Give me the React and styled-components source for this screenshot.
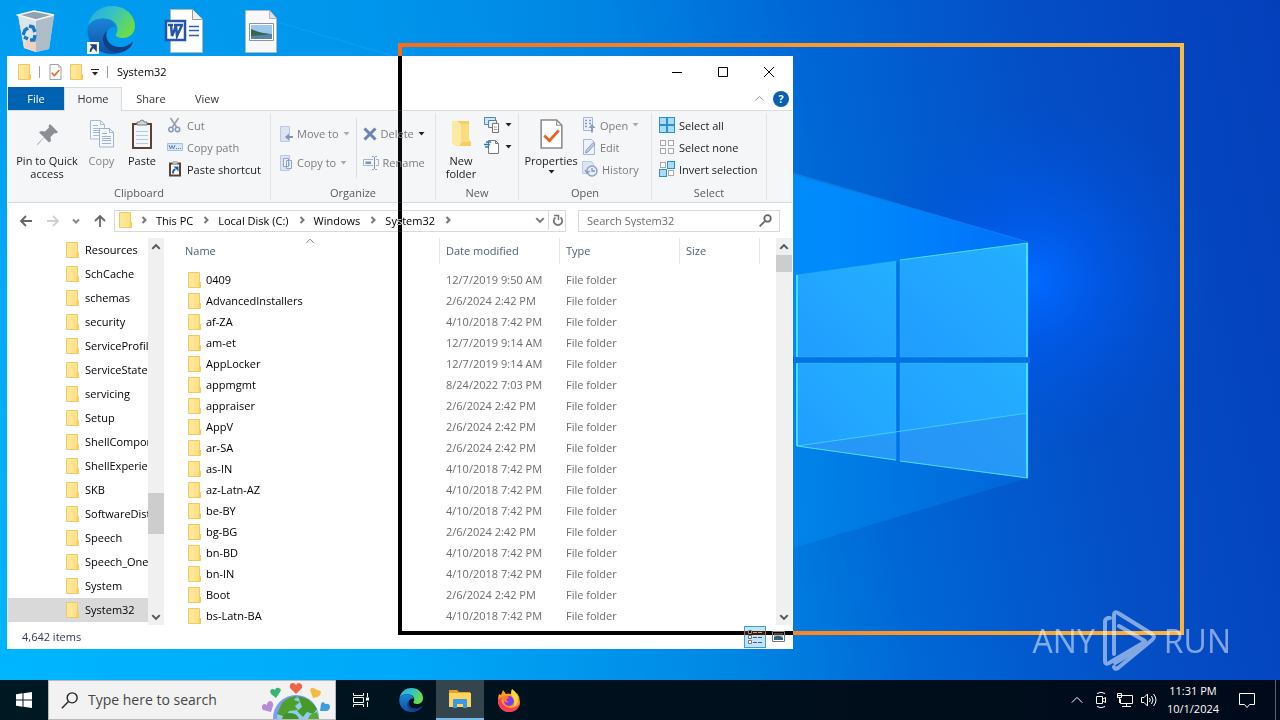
import React from "react";
import styled, { createGlobalStyle } from "styled-components";

const GlobalStyle = createGlobalStyle`
  * {
    box-sizing: border-box;
  }

  body {
    margin: 0;
    font-family: "Open Sans", "Noto Sans", sans-serif;
    font-size: 11px;
    line-height: 13px;
    color: #111;
    overflow: hidden;
  }

  button, input {
    font: inherit;
    color: inherit;
    background: none;
    border: none;
    padding: 0;
    margin: 0;
  }

  svg {
    display: block;
    flex: none;
  }
`;

const Screen = styled.div`
  display: flex;
  flex-direction: column;
  height: 100vh;
`;

const Desktop = styled.main`
  position: relative;
  isolation: isolate;
  flex: 1;
  min-height: 0;
  overflow: hidden;
`;

const Wallpaper = styled.svg`
  position: absolute;
  inset: 0;
  width: 100%;
  height: 100%;
`;

const Shortcuts = styled.div`
  position: relative;
  display: flex;
  gap: 27px;
  padding: 6px 12px;
`;

const Shortcut = styled.button`
  width: 48px;
  height: 50px;
  display: flex;
  justify-content: center;
`;

/* ---------- explorer window ---------- */

const Window = styled.section`
  position: absolute;
  left: 7px;
  right: 487px;
  top: 56px;
  bottom: 31px;
  display: flex;
  flex-direction: column;
  padding: 0 1px;
  background: #fff;
`;

const TitleBar = styled.header`
  display: flex;
  align-items: center;
  height: 31px;
  padding-left: 10px;
  gap: 8px;
`;

const WindowTitle = styled.h1`
  flex: 1;
  margin: 0;
  font-size: 11px;
  font-weight: 400;
  color: #000;
`;

const Divider = styled.span`
  width: 1px;
  height: 12px;
  margin-right: 1px;
  background: #a0a0a0;
`;

const Captions = styled.div`
  display: flex;
`;

const CaptionButton = styled.button`
  width: 46px;
  height: 31px;
  display: flex;
  align-items: center;
  justify-content: center;
`;

const Tabs = styled.nav`
  display: flex;
  height: 24px;
  border-bottom: 1px solid #dadbdc;
`;

const Tab = styled.button`
  width: ${(p) => p.$width || 56}px;
  height: ${(p) => (p.$active ? 24 : 23)}px;
  padding-bottom: ${(p) => (p.$active ? 2 : 0)}px;
  color: ${(p) => (p.$file ? "#fff" : "#333")};
  background: ${(p) => (p.$file ? "#0063b1" : p.$active ? "#f5f6f7" : "none")};
  border: ${(p) => (p.$active ? "1px solid #dadbdc" : "none")};
  border-bottom: none;
`;

const TabsEnd = styled.div`
  display: flex;
  align-items: center;
  gap: 8px;
  margin-left: auto;
  padding-right: 3px;
`;

const HelpButton = styled.button`
  width: 16px;
  height: 16px;
  border-radius: 50%;
  background: #0a5fb4;
  color: #fff;
  font-weight: 700;
`;

const Ribbon = styled.div`
  display: flex;
  height: 92px;
  background: #f5f6f7;
  border-bottom: 1px solid #dadbdc;
`;

const Group = styled.section`
  display: flex;
  flex-direction: column;
  align-items: center;
  width: ${(p) => p.$width}px;
  margin: 2px 0;
  border-right: 1px solid #e2e3e4;
`;

const GroupBody = styled.div`
  display: flex;
  align-items: flex-start;
  width: 100%;
  height: 72px;
  padding-left: ${(p) => p.$indent || 0}px;
`;

const GroupLabel = styled.h2`
  margin: 0;
  font-size: 11px;
  line-height: 15px;
  font-weight: 400;
  color: #5a5a5a;
`;

const BigButton = styled.button`
  display: flex;
  flex-direction: column;
  align-items: center;
  gap: 3px;
  width: ${(p) => p.$width}px;
  padding-top: 4px;
  color: ${(p) => (p.$disabled ? "#838383" : "#222")};
`;

const BigIcon = styled.span`
  display: flex;
  align-items: center;
  height: 34px;
`;

const Stack = styled.div`
  display: flex;
  flex-direction: column;
  padding: ${(p) => (p.$tall ? "6px 0 0" : "1px 0 0")};
`;

const SmallButton = styled.button`
  display: flex;
  align-items: center;
  gap: 4px;
  height: ${(p) => (p.$tall ? 29 : 22)}px;
  color: ${(p) => (p.$disabled ? "#7c7c7c" : "#222")};
  white-space: nowrap;
`;

const OrganizeDivider = styled.span`
  width: 1px;
  height: 60px;
  margin: 5px 6px 0 6px;
  background: #dcdddf;
`;

const AddressBar = styled.div`
  display: flex;
  align-items: center;
  height: 35px;
  padding: 0 12px 0 11px;
  gap: 12px;
`;

const NavButtons = styled.div`
  display: flex;
  align-items: center;
  justify-content: space-between;
  width: 88px;
`;

const Breadcrumb = styled.div`
  display: flex;
  align-items: center;
  flex: 1;
  height: 22px;
  margin-left: -5px;
  padding: 0 0 1px 4px;
  border: 1px solid #d9d9d9;
  color: #000;
`;

const Crumb = styled.button`
  display: flex;
  align-items: center;
  gap: 9px;
  padding-left: 8px;
`;

const RefreshBox = styled.div`
  display: flex;
  align-items: center;
  margin-left: auto;
  height: 100%;
  gap: 3px;

  button + button {
    height: 100%;
    padding: 0 1px 0 2px;
    border-left: 1px solid #d9d9d9;
  }
`;

const SearchField = styled.label`
  display: flex;
  align-items: center;
  width: 202px;
  height: 22px;
  padding: 0 7px 1px 8px;
  border: 1px solid #d9d9d9;

  input {
    flex: 1;
    min-width: 0;
    outline: none;
  }

  input::placeholder {
    color: #6d6d6d;
    opacity: 1;
  }
`;

const Content = styled.div`
  display: flex;
  flex: 1;
  min-height: 0;
`;

const Tree = styled.ul`
  width: 140px;
  margin: 0;
  padding: 0;
  list-style: none;
  overflow: hidden;
`;

const TreeLink = styled.a`
  display: flex;
  align-items: center;
  gap: 6px;
  height: 24px;
  padding: 0 0 1px 58px;
  color: #000;
  text-decoration: none;
  white-space: nowrap;
  background: ${(p) => (p.$selected ? "#d9d9d9" : "none")};
`;

const ScrollTrack = styled.div`
  display: flex;
  flex-direction: column;
  align-items: center;
  width: 16px;
  background: #f0f0f0;

  button {
    height: 17px;
  }
`;

const ScrollSpace = styled.div`
  flex: ${(p) => p.$grow};
`;

const ScrollThumb = styled.div`
  width: 100%;
  height: ${(p) => p.$size}px;
  background: #cdcdcd;
`;

const FilePane = styled.div`
  flex: 1;
  min-width: 0;
  overflow: hidden;
`;

const FileTable = styled.table`
  width: 596px;
  table-layout: fixed;
  border-collapse: collapse;
`;

const HeadCell = styled.th`
  position: relative;
  width: ${(p) => p.$width}px;
  height: 31px;
  padding: 0;
  vertical-align: top;
  text-align: left;
  font-weight: 400;
  color: #4c607a;
`;

const HeadLabel = styled.div`
  height: 26px;
  line-height: 26px;
  padding-left: ${(p) => p.$indent || 6}px;
  border-right: 1px solid #e5e5e5;
`;

const SortMark = styled.span`
  position: absolute;
  left: 51%;
  top: -2px;
`;

const Cell = styled.td`
  height: 21px;
  padding: 0 0 0 6px;
  color: #6d6d6d;
  white-space: nowrap;
`;

const NameCell = styled(Cell)`
  padding-left: 24px;
  color: #000;
`;

const FileName = styled.span`
  display: flex;
  align-items: center;
  gap: 5px;
`;

const StatusBar = styled.footer`
  display: flex;
  align-items: center;
  justify-content: space-between;
  height: 24px;
  padding: 0 4px 1px 14px;
  color: #2b3a63;
`;

const ViewButtons = styled.div`
  display: flex;
  align-items: center;
  gap: 2px;
`;

const ViewButton = styled.button`
  display: flex;
  align-items: center;
  justify-content: center;
  width: ${(p) => (p.$active ? 22 : 20)}px;
  height: 22px;
  background: ${(p) => (p.$active ? "#bfe6f8" : "none")};
  border: ${(p) => (p.$active ? "1px solid #3c9fd0" : "none")};
`;

/* Inverted outline shown while a window is being dragged */
const DragOutline = styled.div`
  position: absolute;
  left: 398px;
  right: 96px;
  top: 43px;
  bottom: 45px;
  border: 4px solid #fff;
  mix-blend-mode: difference;
  pointer-events: none;
`;

const Watermark = styled.div`
  position: absolute;
  right: 49px;
  bottom: 8px;
  display: flex;
  align-items: center;
  gap: 7px;
  font-family: "Open Sans", sans-serif;
  font-size: 32px;
  line-height: 62px;
  color: #fff;
  opacity: 0.5;
`;

/* ---------- taskbar ---------- */

const Taskbar = styled.footer`
  display: flex;
  align-items: center;
  height: 40px;
  background: linear-gradient(90deg, #001821, #000f1c 60%, #000a1a);
  color: #fff;
`;

const TaskButton = styled.button`
  display: flex;
  align-items: center;
  justify-content: center;
  width: ${(p) => p.$width || 48}px;
  height: 40px;
  margin-right: 1px;
  background: ${(p) => (p.$active ? "#34454e" : "none")};
  border-bottom: ${(p) => (p.$active ? "2px solid #76b9ed" : "none")};
`;

const TaskSearch = styled.label`
  display: flex;
  align-items: center;
  gap: 10px;
  width: 288px;
  height: 40px;
  margin-left: -1px;
  padding: 0 5px 0 12px;
  background: #f2f2f2;
  border: 1px solid #b9b9b9;

  input {
    flex: 1;
    min-width: 0;
    font-size: 14px;
    line-height: 20px;
    outline: none;
  }

  input::placeholder {
    color: #454545;
    opacity: 1;
  }
`;

const Tray = styled.div`
  display: flex;
  align-items: center;
  margin-left: auto;
  height: 100%;
`;

const TrayButton = styled.button`
  display: flex;
  align-items: center;
  justify-content: center;
  width: 24px;
  height: 40px;
`;

const Clock = styled.div`
  width: 64px;
  text-align: center;
  line-height: 18px;
`;

const NoticeButton = styled(TrayButton)`
  width: 44px;
  margin-right: 6px;
`;

const ShowDesktop = styled.button`
  width: 5px;
  height: 40px;
  border-left: 1px solid #5b626a;
`;

/* ---------- icons ---------- */

const Chevron = ({ dir = "down", size = 8, color = "#555", weight = 2 }) => {
  const turn = { down: 0, left: 90, up: 180, right: 270 }[dir];
  return (
    <svg width={size} height={size} viewBox="0 0 8 8">
      <path
        d="M1 2.5l3 3 3-3"
        fill="none"
        stroke={color}
        strokeWidth={(weight * 8) / size}
        transform={`rotate(${turn} 4 4)`}
      />
    </svg>
  );
};

const Caret = ({ color = "#222" }) => (
  <svg width="7" height="4" viewBox="0 0 7 4">
    <path d="M0.5 0h6L3.5 3.5z" fill={color} />
  </svg>
);

const Folder = () => (
  <svg width="13" height="16" viewBox="0 0 13 16">
    <path d="M0.5 0.5h11v9l1 1v5h-12z" fill="#fde28b" stroke="#edcb63" />
    <path d="M1 1h5v14H1z" fill="#fff0ad" opacity=".4" />
    <path d="M10.5 15v-4l1-1.500 1 1.500v4z" fill="#f5cf5f" />
  </svg>
);

const CheckDoc = ({ width = 13, height = 16 }) => (
  <svg width={width} height={height} viewBox="0 0 22 29">
    <path d="M1 1h15l5 5v22H1z" fill="#fff" stroke="#8a8a8a" strokeWidth="1.500" />
    <path d="M16 1v5h5" fill="none" stroke="#8a8a8a" />
    <path d="M4 16l5 5 9-10" fill="none" stroke="#e8601c" strokeWidth="2.600" />
  </svg>
);

const Pin = () => (
  <svg width="23" height="23" viewBox="0 0 23 23">
    <path
      d="M14 1l8 8-2 1.500-1.500-.5-4 4 .5 4-2 1.500-5-5L1.500 22 1 21.500 8 14 3 9.500 5 8l4 .5 4-4-.5-1.500z"
      fill="#8b8f94"
    />
  </svg>
);

const Page = ({ x, y, line }) => (
  <g transform={`translate(${x} ${y})`}>
    <path d="M.5.500h10l4 4v14.500H.5z" fill="#f6f9fe" stroke={line} />
    <path
      d="M10.500.500v4h4M3 5.500h5M3 8.500h9M3 10.500h9M3 12.500h9M3 15.500h9"
      fill="none"
      stroke={line}
    />
  </g>
);

const CopyIcon = () => (
  <svg width="26" height="30" viewBox="0 0 26 30">
    <Page x={1} y={1} line="#a9bbdd" />
    <Page x={10} y={9} line="#9fb3da" />
  </svg>
);

const PasteIcon = () => (
  <svg width="22" height="31" viewBox="0 0 22 31">
    <path d="M1 4h20v26H1z" fill="#5d4232" />
    <path d="M3 6h16v22H3z" fill="#f3f7fb" />
    <path d="M5 12.500h12M5 16.500h12M5 20.500h12M5 24.500h12" stroke="#b4cae0" />
    <path d="M6 6V3h3a2 2 0 014 0h3v3z" fill="#d5d8da" stroke="#777" />
  </svg>
);

const CutIcon = () => (
  <svg width="16" height="16" viewBox="0 0 16 16" fill="none">
    <path d="M3.500 1l6 9M11.500 1l-6 9" stroke="#9a9fa6" strokeWidth="1.600" />
    <circle cx="4" cy="12.500" r="2.200" stroke="#8398bd" strokeWidth="1.500" />
    <circle cx="10.500" cy="12.500" r="2.200" stroke="#8398bd" strokeWidth="1.500" />
  </svg>
);

const PathIcon = () => (
  <svg width="16" height="16" viewBox="0 0 16 16">
    <path d="M.5 4.500h15v7H.5z" fill="#dbe7f6" stroke="#a4bde0" />
    <path d="M2 6l1.500 4L5 6.500 6.500 10 8 6" fill="none" stroke="#5e80b5" />
    <path d="M9 9.500h1m1 0h1m1 0h1" stroke="#5e80b5" />
  </svg>
);

const ShortcutIcon = () => (
  <svg width="16" height="16" viewBox="0 0 16 16">
    <path d="M2 1.500h12v14H2z" fill="#5d4232" />
    <path d="M4 3.500h8v10H4z" fill="#fff" />
    <path d="M5.500 0h5v3h-5z" fill="#b8bcc0" />
    <path d="M6 12.500c0-3 .5-4 2.500-4" fill="none" stroke="#1b5fae" strokeWidth="2" />
    <path d="M6.500 5.500h5v5z" fill="#1b5fae" />
  </svg>
);

const MoveIcon = ({ copy }) => (
  <svg width="13" height="16" viewBox="0 0 13 16">
    <path d="M.5.500h9v15h-9z" fill="#dce4f3" stroke="#bac8e2" />
    {copy ? (
      <path
        d="M3.500 3.500h5v8h-5zM6.500 5.500h5v8h-5zM8 8h2M8 10h2"
        fill="#eef3fb"
        stroke="#8fa4cb"
      />
    ) : (
      <path d="M5 11l4-3.500V10h4v2H9v2.500z" fill="#8294b8" />
    )}
  </svg>
);

const DeleteIcon = () => (
  <svg width="14" height="14" viewBox="0 0 14 14">
    <path d="M1.500 1.500l11 11M12.500 1.500l-11 11" stroke="#6c84b0" strokeWidth="3" />
  </svg>
);

const RenameIcon = () => (
  <svg width="16" height="16" viewBox="0 0 16 16" fill="none">
    <path d="M10 4.500H.5v6H10M13 4.500h2.500v6H13" stroke="#a4b3cf" />
    <path d="M2.500 6.500H8v2.500H2.500z" fill="#7d93bd" />
    <path d="M9 1.500h1.500l1 1 1-1H14M9 14.500h1.500l1-1 1 1H14M11.500 2v12" stroke="#8195bb" />
  </svg>
);

const NewFolderIcon = () => (
  <svg width="21" height="28" viewBox="0 0 21 28">
    <path d="M5 1h13v19l2 2v4H5z" fill="#f6cf60" />
    <path d="M1 1h5l4 3v18l-2 5-7-3z" fill="#fde9a6" />
    <path d="M10 4h8v18h-8z" fill="#fbdc7c" />
  </svg>
);

const NewItemIcon = () => (
  <svg width="17" height="16" viewBox="0 0 17 16">
    <path d="M.5.500h11v7H.5z" fill="#cfe6f8" stroke="#4e87b5" />
    <path d="M4.500 3.500h8v7h-8z" fill="#e7f0f7" stroke="#5d7f9b" />
    <path d="M8.500 6.500h6v9h-6z" fill="#fff" stroke="#777" />
    <path d="M10 10h3M10 12.500h3" stroke="#c99a86" />
  </svg>
);

const EasyAccessIcon = () => (
  <svg width="17" height="16" viewBox="0 0 17 16">
    <path d="M4.500 1.500h7l3 3v10h-10z" fill="#fff" stroke="#6f7f8d" />
    <path d="M11.500 1.500v3h3" fill="none" stroke="#6f7f8d" />
    <path d="M2 3h5M0 5.500h6M1 8h4" stroke="#2f78b6" strokeWidth="1.500" />
  </svg>
);

const OpenIcon = () => (
  <svg width="14" height="16" viewBox="0 0 14 16">
    <path d="M1.500.500h9v13h-9z" fill="#eef3fb" stroke="#a5b4d3" />
    <path d="M3 3.500h2M3 6.500h2M3 9.500h2M7 3.500h2M7 6.500h2" stroke="#8699c1" strokeWidth="1.500" />
    <path d="M10 7l3.500 4H11v4.500H9V11H6.500z" fill="#8d9dc0" />
  </svg>
);

const EditIcon = () => (
  <svg width="14" height="16" viewBox="0 0 14 16">
    <path d="M1.500.500h8l3 3v12h-11z" fill="#eef3fb" stroke="#a9b7d2" />
    <path d="M13 5l-7 8-2.500 1 .5-2.500 7-8z" fill="#bdc9e2" stroke="#90a2c6" />
  </svg>
);

const HistoryIcon = () => (
  <svg width="16" height="16" viewBox="0 0 16 16">
    <path d="M.5.500h9l2 3v9H.5z" fill="#dde5f3" stroke="#bcc9e1" />
    <circle cx="10" cy="10" r="5" fill="#e9eef8" stroke="#8fa1c6" strokeWidth="1.500" />
    <path d="M10 7v3h3M3 9l2 3 3-2" fill="none" stroke="#8195bb" strokeWidth="1.300" />
  </svg>
);

const SelectIcon = ({ filled }) => (
  <svg width="16" height="16" viewBox="0 0 16 16">
    {[
      [0, 0],
      [8, 0],
      [0, 8],
      [8, 8],
    ].map(([x, y], i) => {
      const on = filled.includes(i);
      const inset = on ? 0.5 : 1.5;
      return (
        <rect
          key={i}
          x={x + inset}
          y={y + inset}
          width={on ? 7 : 5}
          height={on ? 7 : 5}
          fill={on ? "#a9dcf8" : "#fff"}
          stroke={on ? "#2f8fd0" : "#a9a9a9"}
        />
      );
    })}
  </svg>
);

const Arrow = ({ dir, color }) => (
  <svg width="14" height="14" viewBox="0 0 14 14">
    <path
      d="M13 7H2M7 2L2 7l5 5"
      fill="none"
      stroke={color}
      strokeWidth="1.800"
      transform={`rotate(${{ left: 0, up: 90, right: 180 }[dir]} 7 7)`}
    />
  </svg>
);

const RefreshIcon = () => (
  <svg width="13" height="13" viewBox="0 0 13 13">
    <path d="M9.500 3.500a4.200 4.200 0 11-5 0" fill="none" stroke="#777" strokeWidth="1.700" />
    <path d="M3 1.500h4.500V6" fill="none" stroke="#777" strokeWidth="1.500" />
  </svg>
);

const Magnifier = ({ size = 13, color = "#555", weight = 1.6, radius = 4.7 }) => (
  <svg width={size} height={size} viewBox="0 0 16 16">
    <g fill="none" stroke={color} strokeWidth={weight}>
      <circle cx="10.500" cy="5.500" r={radius} />
      <path d="M7 9L.8 15.200" />
    </g>
  </svg>
);

const RecycleBin = () => (
  <svg width="40" height="48" viewBox="0 0 40 48">
    <path d="M2 9l16-4 20 4-5 34-13 3-12-4z" fill="#cfd9e1" />
    <path d="M2 9l18 5v32L8 42z" fill="#dde4ea" />
    <path d="M20 14l18-5-5 34-13 3z" fill="#aebdc8" />
    <path d="M2 9l16-4 20 4-18 5z" fill="#8fa2ae" stroke="#f4f7f9" strokeWidth="1.500" />
    <path d="M8 41l2-7 10 2v10z" fill="#edd2c2" />
    <g fill="none" stroke="#1a78c8" strokeWidth="3.400">
      <path d="M7 29l2-5 3-2" />
      <path d="M13 20l4 1 2 5" />
      <path d="M19 29l-1 5h-4" />
      <path d="M12 33l-4-2" />
    </g>
  </svg>
);

const Edge = ({ size = 48, id }) => (
  <svg width={size} height={size} viewBox="0 0 48 48">
    <defs>
      <linearGradient id={`${id}a`} x1="0" x2="1" y1="0" y2=".5">
        <stop offset="0" stopColor="#27a7e7" />
        <stop offset=".5" stopColor="#35c2c6" />
        <stop offset="1" stopColor="#69dc4c" />
      </linearGradient>
      <linearGradient id={`${id}b`} x1="0" x2="0" y1="0" y2="1">
        <stop offset="0" stopColor="#1a86d8" />
        <stop offset="1" stopColor="#0f4fa3" />
      </linearGradient>
    </defs>
    <path
      d="M1 20C4 6 14 0 25 0c14 0 23 10 23 20 0 8-6 12-12 12-5 0-8-2-7-4 3-4 2-13-8-15C12 11 4 14 1 20z"
      fill={`url(#${id}a)`}
    />
    <path
      d="M1 20c4-6 12-9 20-7 4 1 7 4 8 8-5-1-10 3-10 9 0 9 8 13 17 13 3 0 5-1 8-3-4 5-11 8-19 8C10 48-2 36 1 20z"
      fill={`url(#${id}b)`}
    />
    <path
      d="M20 25c-3 9 4 17 15 16 4 0 8-3 10-5 1-1 1 1 0 3-4 6-12 8-18 7-10-2-15-15-7-21z"
      fill="#123f86"
    />
  </svg>
);

const EdgeShortcut = () => (
  <svg width="48" height="50" viewBox="0 0 48 50">
    <Edge size={48} id="desk" />
    <path d="M0 36h12v12H0z" fill="#f4f4f4" />
    <path d="M3.500 46c0-4 1-5 4-5.500M4.500 39H9v5z" fill="#1f3f7d" stroke="#1f3f7d" strokeWidth="1.600" />
  </svg>
);

const WordDoc = () => (
  <svg width="44" height="48" viewBox="0 0 44 48">
    <path d="M6.500 3.500h22l10 10v33h-32z" fill="#fff" stroke="#b5b5b5" />
    <path d="M28.500 3.500v10h10" fill="#f0f0f0" stroke="#999" />
    <path d="M25 20.500h10M25 24.500h10M25 29.500h10" stroke="#2b5fb4" strokeWidth="1.500" />
    <path d="M2 15h19v19H2z" fill="#fff" stroke="#2456a8" strokeWidth="2.500" />
    <path d="M4 19h5M10 19h5M15 19h4M7 19l1 11 4-10 1 10 5-11" fill="none" stroke="#2456a8" strokeWidth="2.500" />
  </svg>
);

const ImageDoc = () => (
  <svg width="34" height="48" viewBox="0 0 34 48">
    <path d="M1.500 4.500h24l7 8v34h-31z" fill="#f8f8f8" stroke="#b5b5b5" />
    <path d="M25.500 4.500v8h7" fill="#e2e2e2" stroke="#b5b5b5" />
    <path d="M5.500 17.500h24v17h-24z" fill="#fff" stroke="#8b9298" />
    <path d="M7 19h21v14H7z" fill="#9cc8f0" />
    <path d="M7 23c5 2 10 4 21 5v5H7z" fill="#2f6a4a" />
    <path d="M7 30c8-1 13-1 21-2v5H7z" fill="#5583ad" />
  </svg>
);

const AnyRunMark = () => (
  <svg width="55" height="62" viewBox="0 0 55 62">
    <g fill="none" stroke="#fff" strokeWidth="4" strokeLinejoin="round" strokeLinecap="round">
      <path d="M8 8H6q-3 1-3 4v39q0 4 4 2l34-20" />
      <path d="M12 44V5q0-4 4-2l34 21q4 3 0 6L16 58q-3 2-4-1" />
      <path d="M17 16l26 15M13 53l27-16" />
    </g>
  </svg>
);

const Globe = () => (
  <svg width="68" height="38" viewBox="0 0 68 38">
    <circle cx="34" cy="37" r="23" fill="#7d9df0" />
    <circle cx="36" cy="38" r="21" fill="#8fcdf0" />
    <path d="M20 22q7-7 15-7l-3 4 6 2-5 4 3 4-9 1-3 6-9-3z" fill="#4da02c" />
    <path d="M36 15q13 2 19 13l-4 5-6-2-4 5-6-6 5-4z" fill="#469a28" />
    <path d="M20 38q1-6 8-6t9 6z" fill="#3f9428" />
    <path d="M48 34l7-3 2 7H46z" fill="#58a838" />
    <g>
      <path d="M34 13l-6-6q-1-5 3-5 2 0 3 2 1-2 3-2 4 1 3 5z" fill="#f0624a" />
      <path d="M14 17l-5-4q-2-4 1-5 2 0 3 1 1-3 4-2 3 1 1 4z" fill="#37b573" />
      <path d="M51 17l-3-8q2-4 5-1 1 0 2 1 4 0 4 3-1 3-4 4z" fill="#f6ba3d" />
      <path d="M9 31l-8-2q-3-4 1-6 2 0 3 1 0-4 4-4 3 2 2 5z" fill="#b78bd8" />
      <path d="M58 30l1-7q2-4 4 0 4-1 5 2 0 4-3 5z" fill="#3d9de0" />
    </g>
  </svg>
);

const TaskView = () => (
  <svg width="18" height="18" viewBox="0 0 18 18" fill="none" stroke="#fff">
    <path d="M1.500 2V4.500h10V2M1.500 16v-2.500h10V16M1.500 6.500h10v5h-10zM15.500 2v4M15.500 11v5" />
    <path d="M14 6.500h3v3h-3z" fill="#fff" stroke="none" />
  </svg>
);

const ExplorerIcon = () => (
  <svg width="24" height="22" viewBox="0 0 24 22">
    <path d="M1 2h8l2 2h11v4H1z" fill="#e8a01d" />
    <path d="M1 5h22v14H1z" fill="#fcd462" />
    <path d="M5 20v-8q0-1 1-1h12q1 0 1 1v8h-4v-4H9v4z" fill="#3c9be0" />
  </svg>
);

const Firefox = () => (
  <svg width="24" height="24" viewBox="0 0 24 24">
    <path
      d="M2 6l2 1 2-5 3 4q3-1 5 0 0-3 1-5 2 4 4 5l1-1q3 4 3 9c0 6-5 10-11 10S1 19 1 13q0-4 1-7z"
      fill="#ff9a22"
    />
    <path d="M1 12c0 7 5 12 11 12s10-4 11-9c-3 5-9 6-13 4S3 14 5 9z" fill="#fb3b57" />
    <circle cx="12" cy="13" r="5" fill="#7c3cf0" />
    <path d="M15 1q7 5 6 12-1 5-5 6 3-5 0-9-3-3-1-9z" fill="#ffd83d" />
    <path d="M5 9q4-2 7 0l-3 3 3 2q-5 2-7-5z" fill="#ff7a2a" />
  </svg>
);

const Background = () => (
  <Wallpaper viewBox="0 0 1280 680" preserveAspectRatio="none">
    <defs>
      <linearGradient id="base" x1="0" x2="1" y1="0.100" y2="0">
        <stop offset="0" stopColor="#00a2f4" />
        <stop offset=".3" stopColor="#0098ee" />
        <stop offset=".48" stopColor="#0083e2" />
        <stop offset=".62" stopColor="#0068d6" />
        <stop offset=".8" stopColor="#044ec6" />
        <stop offset="1" stopColor="#043fba" />
      </linearGradient>
      <radialGradient id="floor" cx="0" cy="680" r="900" gradientUnits="userSpaceOnUse">
        <stop offset="0" stopColor="#00b6ff" />
        <stop offset=".45" stopColor="#00acfb" stopOpacity=".8" />
        <stop offset="1" stopColor="#0080dd" stopOpacity="0" />
      </radialGradient>
      <radialGradient id="glow" cx="1035" cy="280" r="180" gradientUnits="userSpaceOnUse">
        <stop offset="0" stopColor="#006aff" />
        <stop offset=".35" stopColor="#005cf0" stopOpacity=".7" />
        <stop offset="1" stopColor="#0050d8" stopOpacity="0" />
      </radialGradient>
      <linearGradient id="beam" x1="700" x2="1028" y1="0" y2="0" gradientUnits="userSpaceOnUse">
        <stop offset="0" stopColor="#0090fb" />
        <stop offset=".5" stopColor="#0088fb" />
        <stop offset="1" stopColor="#0070fa" />
      </linearGradient>
      <linearGradient id="lowBeam" x1="700" x2="1028" y1="0" y2="0" gradientUnits="userSpaceOnUse">
        <stop offset="0" stopColor="#0090ee" />
        <stop offset="1" stopColor="#006ce0" stopOpacity=".6" />
      </linearGradient>
      <linearGradient id="pane" x1="0" x2="1" y1="1" y2="0">
        <stop offset="0" stopColor="#209cff" />
        <stop offset="1" stopColor="#24b0ff" />
      </linearGradient>
    </defs>
    <path d="M0 0h1280v680H0z" fill="url(#base)" />
    <path d="M0 0h1280v680H0z" fill="url(#floor)" />
    <path d="M0 0h1280v680H0z" fill="url(#glow)" />
    <path d="M793 174l235 68v118H793z" fill="url(#beam)" />
    <path d="M793 360h235v118l-235 70z" fill="url(#lowBeam)" />
    <path d="M260 17l768 225" fill="none" stroke="#36a8ff" strokeOpacity=".35" />
    <path d="M793 357h237v6H793zM896 262h4v198h-4z" fill="#0074e6" />
    <g fill="url(#pane)" stroke="#3fc0ff" strokeOpacity=".3">
      <path d="M797 275l99-14v96h-99z" />
      <path d="M900 260l128-17v114H900z" />
      <path d="M797 363h99v97l-99-14z" />
      <path d="M900 363h128v115l-128-17z" />
    </g>
    <path d="M797 446l99-13v27zM900 432l128-19v65l-128-17z" fill="#2a8ff2" opacity=".6" />
    <g fill="none" stroke="#48dcff" strokeWidth="2">
      <path d="M1027 243v114M1027 363v115M797 275v82M797 363v83" />
      <path d="M797 446l99 14M900 461l128 17M900 260l128-17" strokeWidth="1" />
      <path d="M797 446l231-33" strokeWidth="1" strokeOpacity=".7" />
    </g>
  </Wallpaper>
);

/* ---------- data ---------- */

const tree = [
  "Resources",
  "SchCache",
  "schemas",
  "security",
  "ServiceProfiles",
  "ServiceState",
  "servicing",
  "Setup",
  "ShellComponents",
  "ShellExperiences",
  "SKB",
  "SoftwareDistribution",
  "Speech",
  "Speech_OneCore",
  "System",
  "System32",
];

const files = [
  ["0409", "12/7/2019 9:50 AM"],
  ["AdvancedInstallers", "2/6/2024 2:42 PM"],
  ["af-ZA", "4/10/2018 7:42 PM"],
  ["am-et", "12/7/2019 9:14 AM"],
  ["AppLocker", "12/7/2019 9:14 AM"],
  ["appmgmt", "8/24/2022 7:03 PM"],
  ["appraiser", "2/6/2024 2:42 PM"],
  ["AppV", "2/6/2024 2:42 PM"],
  ["ar-SA", "2/6/2024 2:42 PM"],
  ["as-IN", "4/10/2018 7:42 PM"],
  ["az-Latn-AZ", "4/10/2018 7:42 PM"],
  ["be-BY", "4/10/2018 7:42 PM"],
  ["bg-BG", "2/6/2024 2:42 PM"],
  ["bn-BD", "4/10/2018 7:42 PM"],
  ["bn-IN", "4/10/2018 7:42 PM"],
  ["Boot", "2/6/2024 2:42 PM"],
  ["bs-Latn-BA", "4/10/2018 7:42 PM"],
];

const crumbs = ["This PC", "Local Disk (C:)", "Windows", "System32"];

const ExplorerRibbon = () => (
  <Ribbon>
    <Group $width={263}>
      <GroupBody>
        <BigButton $width={78}>
          <BigIcon><Pin /></BigIcon>
          <span>Pin to Quick<br />access</span>
        </BigButton>
        <BigButton $width={31} $disabled>
          <BigIcon><CopyIcon /></BigIcon>
          Copy
        </BigButton>
        <BigButton $width={50}>
          <BigIcon><PasteIcon /></BigIcon>
          Paste
        </BigButton>
        <Stack>
          <SmallButton $disabled><CutIcon />Cut</SmallButton>
          <SmallButton $disabled><PathIcon />Copy path</SmallButton>
          <SmallButton><ShortcutIcon />Paste shortcut</SmallButton>
        </Stack>
      </GroupBody>
      <GroupLabel>Clipboard</GroupLabel>
    </Group>
    <Group $width={165}>
      <GroupBody $indent={9}>
        <Stack $tall>
          <SmallButton $tall $disabled><MoveIcon />Move to<Caret color="#aaa" /></SmallButton>
          <SmallButton $tall $disabled><MoveIcon copy />Copy to<Caret color="#aaa" /></SmallButton>
        </Stack>
        <OrganizeDivider />
        <Stack $tall>
          <SmallButton $tall $disabled><DeleteIcon />Delete<Caret /></SmallButton>
          <SmallButton $tall $disabled><RenameIcon />Rename</SmallButton>
        </Stack>
      </GroupBody>
      <GroupLabel>Organize</GroupLabel>
    </Group>
    <Group $width={83}>
      <GroupBody $indent={2}>
        <BigButton $width={46}>
          <BigIcon><NewFolderIcon /></BigIcon>
          <span>New<br />folder</span>
        </BigButton>
        <Stack>
          <SmallButton aria-label="New item"><NewItemIcon /><Caret /></SmallButton>
          <SmallButton aria-label="Easy access"><EasyAccessIcon /><Caret /></SmallButton>
        </Stack>
      </GroupBody>
      <GroupLabel>New</GroupLabel>
    </Group>
    <Group $width={133}>
      <GroupBody $indent={1}>
        <BigButton $width={62}>
          <BigIcon><CheckDoc width={23} height={30} /></BigIcon>
          Properties
          <Caret />
        </BigButton>
        <Stack>
          <SmallButton $disabled><OpenIcon />Open<Caret color="#aaa" /></SmallButton>
          <SmallButton $disabled><EditIcon />Edit</SmallButton>
          <SmallButton $disabled><HistoryIcon />History</SmallButton>
        </Stack>
      </GroupBody>
      <GroupLabel>Open</GroupLabel>
    </Group>
    <Group $width={115}>
      <GroupBody $indent={7}>
        <Stack>
          <SmallButton><SelectIcon filled={[0, 1, 2, 3]} />Select all</SmallButton>
          <SmallButton><SelectIcon filled={[]} />Select none</SmallButton>
          <SmallButton><SelectIcon filled={[1, 2]} />Invert selection</SmallButton>
        </Stack>
      </GroupBody>
      <GroupLabel>Select</GroupLabel>
    </Group>
  </Ribbon>
);

const Explorer = () => (
  <Window>
    <TitleBar>
      <Folder />
      <Divider />
      <CheckDoc />
      <Folder />
      <svg width="8" height="8" viewBox="0 0 8 8">
        <path d="M0 1.500h8" stroke="#222" />
        <path d="M1 4h6L4 7.500z" fill="#222" />
      </svg>
      <Divider />
      <WindowTitle>System32</WindowTitle>
      <Captions>
        <CaptionButton aria-label="Minimize">
          <svg width="10" height="10" viewBox="0 0 10 10"><path d="M0 5.500h10" stroke="#000" /></svg>
        </CaptionButton>
        <CaptionButton aria-label="Maximize">
          <svg width="10" height="10" viewBox="0 0 10 10"><path d="M.5.500h9v9h-9z" fill="none" stroke="#000" /></svg>
        </CaptionButton>
        <CaptionButton aria-label="Close">
          <svg width="10" height="10" viewBox="0 0 10 10"><path d="M0 0l10 10M10 0L0 10" stroke="#000" /></svg>
        </CaptionButton>
      </Captions>
    </TitleBar>
    <Tabs>
      <Tab $file>File</Tab>
      <Tab $active $width={58}>Home</Tab>
      <Tab $width={58}>Share</Tab>
      <Tab $width={54}>View</Tab>
      <TabsEnd>
        <Chevron dir="up" size={11} color="#999" weight={1} />
        <HelpButton>?</HelpButton>
      </TabsEnd>
    </Tabs>
    <ExplorerRibbon />
    <AddressBar>
      <NavButtons>
        <button aria-label="Back"><Arrow dir="left" color="#666" /></button>
        <button aria-label="Forward"><Arrow dir="right" color="#d0d0d0" /></button>
        <button aria-label="Recent"><Chevron color="#888" /></button>
        <button aria-label="Up"><Arrow dir="up" color="#666" /></button>
      </NavButtons>
      <Breadcrumb>
        <Folder />
        <Crumb aria-label="Root"><Chevron dir="right" color="#777" /></Crumb>
        {crumbs.map((crumb) => (
          <Crumb key={crumb}>
            {crumb}
            <Chevron dir="right" color="#777" />
          </Crumb>
        ))}
        <RefreshBox>
          <button aria-label="Previous locations"><Chevron size={10} color="#777" /></button>
          <button aria-label="Refresh"><RefreshIcon /></button>
        </RefreshBox>
      </Breadcrumb>
      <SearchField>
        <input type="text" placeholder="Search System32" aria-label="Search System32" />
        <Magnifier color="#666" weight={2.2} radius={4} />
      </SearchField>
    </AddressBar>
    <Content>
      <Tree>
        {tree.map((name) => (
          <li key={name}>
            <TreeLink href="#" $selected={name === "System32"}>
              <Folder />
              {name}
            </TreeLink>
          </li>
        ))}
      </Tree>
      <ScrollTrack>
        <button aria-label="Scroll up"><Chevron dir="up" size={10} /></button>
        <ScrollSpace $grow={238} />
        <ScrollThumb $size={41} />
        <ScrollSpace $grow={74} />
        <button aria-label="Scroll down"><Chevron size={10} /></button>
      </ScrollTrack>
      <FilePane>
        <FileTable>
          <thead>
            <tr>
              <HeadCell $width={276}>
                <HeadLabel $indent={21}>Name</HeadLabel>
                <SortMark><Chevron dir="up" size={10} color="#888" weight={1} /></SortMark>
              </HeadCell>
              <HeadCell $width={120}><HeadLabel>Date modified</HeadLabel></HeadCell>
              <HeadCell $width={120}><HeadLabel>Type</HeadLabel></HeadCell>
              <HeadCell $width={80}><HeadLabel>Size</HeadLabel></HeadCell>
            </tr>
          </thead>
          <tbody>
            {files.map(([name, date]) => (
              <tr key={name}>
                <NameCell><FileName><Folder />{name}</FileName></NameCell>
                <Cell>{date}</Cell>
                <Cell>File folder</Cell>
                <Cell />
              </tr>
            ))}
          </tbody>
        </FileTable>
      </FilePane>
      <ScrollTrack>
        <button aria-label="Scroll up"><Chevron dir="up" size={10} /></button>
        <ScrollThumb $size={17} />
        <ScrollSpace $grow={1} />
        <button aria-label="Scroll down"><Chevron size={10} /></button>
      </ScrollTrack>
    </Content>
    <StatusBar>
      4,642 items
      <ViewButtons>
        <ViewButton $active aria-label="Details">
          <svg width="16" height="14" viewBox="0 0 16 14">
            <path d="M1.500.500h3v3h-3zM1.500 5.500h3v3h-3zM1.500 10.500h3v3h-3z" fill="#fff" stroke="#777" />
            <path d="M6 2.500h4m1 0h4M6 7.500h4m1 0h4M6 12.500h4m1 0h4" stroke="#557" />
          </svg>
        </ViewButton>
        <ViewButton aria-label="Large icons">
          <svg width="13" height="11" viewBox="0 0 13 11">
            <path d="M.5.500h12v10H.5z" fill="#fff" stroke="#777" />
            <path d="M2 2h9v7H2z" fill="#9cc8e8" />
            <path d="M2 6q5-3 9 1v2H2z" fill="#35607a" />
          </svg>
        </ViewButton>
      </ViewButtons>
    </StatusBar>
  </Window>
);

const App = () => {
  return (
    <Screen>
      <GlobalStyle />
      <Desktop>
        <Background />
        <Shortcuts>
          <Shortcut aria-label="Recycle Bin"><RecycleBin /></Shortcut>
          <Shortcut aria-label="Microsoft Edge"><EdgeShortcut /></Shortcut>
          <Shortcut aria-label="Word document"><WordDoc /></Shortcut>
          <Shortcut aria-label="Picture"><ImageDoc /></Shortcut>
        </Shortcuts>
        <Explorer />
        <DragOutline />
        <Watermark>
          <span>ANY</span>
          <AnyRunMark />
          <span>RUN</span>
        </Watermark>
      </Desktop>
      <Taskbar>
        <TaskButton aria-label="Start">
          <svg width="16" height="16" viewBox="0 0 16 16" fill="#fff">
            <path d="M0 2.200L6.500 1.300v6.200H0zM7.500 1.200L16 0v7.500H7.500zM0 8.500h6.500v6.200L0 13.800zM7.500 8.500H16V16l-8.500-1.200z" />
          </svg>
        </TaskButton>
        <TaskSearch>
          <Magnifier size={17} color="#222" weight={1.3} />
          <input type="text" placeholder="Type here to search" aria-label="Type here to search" />
          <Globe />
        </TaskSearch>
        <TaskButton aria-label="Task View" $width={49}><TaskView /></TaskButton>
        <TaskButton aria-label="Edge" $width={49}><Edge size={24} id="task" /></TaskButton>
        <TaskButton aria-label="File Explorer" $active><ExplorerIcon /></TaskButton>
        <TaskButton aria-label="Firefox"><Firefox /></TaskButton>
        <Tray>
          <TrayButton aria-label="Show hidden icons">
            <Chevron dir="up" size={14} color="#fff" weight={1} />
          </TrayButton>
          <TrayButton aria-label="Meet now">
            <svg width="14" height="18" viewBox="0 0 14 18" fill="none" stroke="#fff">
              <path d="M2.500 5.500h6v7h-6zM9 8l2.500-1.500v5L9 10M3 2.500q4-2.500 8 0M3 15.500q4 2.500 8 0" />
            </svg>
          </TrayButton>
          <TrayButton aria-label="Network">
            <svg width="18" height="16" viewBox="0 0 18 16" fill="none" stroke="#fff">
              <path d="M6 3.500h10.500v8h-12V7M10.500 12v2.500M6 14.500h9M1.500 1.500h4v4h-4zM2 3.500h3M3.500 6v5" />
            </svg>
          </TrayButton>
          <TrayButton aria-label="Volume">
            <svg width="18" height="16" viewBox="0 0 18 16" fill="none" stroke="#fff">
              <path d="M1.500 5.500H4L7.500 2v12L4 10.500H1.500zM9.500 6q1.500 2 0 4M11.500 4q3 4 0 8M13.500 2q5 6 0 12" />
            </svg>
          </TrayButton>
          <Clock>
            11:31 PM
            <br />
            10/1/2024
          </Clock>
          <NoticeButton aria-label="Notifications">
            <svg width="16" height="17" viewBox="0 0 16 17" fill="none" stroke="#fff">
              <path d="M.5 1.500h15v11h-5L8 15.500l-2.500-3h-5z" />
            </svg>
          </NoticeButton>
          <ShowDesktop aria-label="Show desktop" />
        </Tray>
      </Taskbar>
    </Screen>
  );
};

export default App;
